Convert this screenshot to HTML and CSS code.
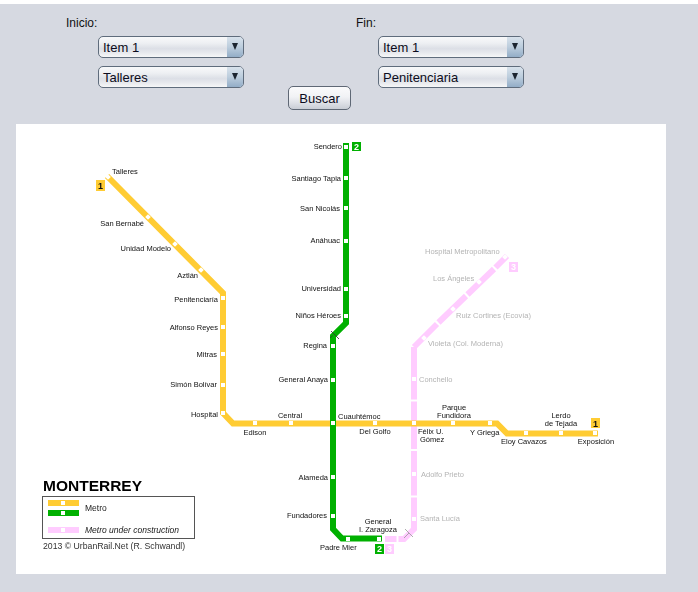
FILE: index.html
```html
<!DOCTYPE html>
<html lang="es">
<head>
<meta charset="utf-8">
<title>Metro Monterrey</title>
<link rel="stylesheet" href="styles.css">
</head>
<body>
<main class="panel">
  <form class="form">
    <div class="field">
      <div class="label">Inicio:</div>
      <div class="combos combos-start">
        <div class="combo"><span class="combo-text">Item 1</span><span class="combo-arrow"></span></div>
        <div class="combo"><span class="combo-text">Talleres</span><span class="combo-arrow"></span></div>
      </div>
    </div>
    <div class="field">
      <div class="label">Fin:</div>
      <div class="combos combos-end">
        <div class="combo"><span class="combo-text">Item 1</span><span class="combo-arrow"></span></div>
        <div class="combo"><span class="combo-text">Penitenciaria</span><span class="combo-arrow"></span></div>
      </div>
    </div>
  </form>
  <button class="search" type="button">Buscar</button>
  <div class="map">
    <svg class="map-svg" width="650" height="450" viewBox="16 124 650 450" xmlns="http://www.w3.org/2000/svg">
      <g class="line pink">
        <path d="M414 347V399.500M414 401.500V449M414 451V495.500M414 497.500V529L404 539H398.500M396.500 539H385"/>
        <path d="M414 347L437 324M438.500 322.500L466 296M467.500 294.500L494 269M495.500 267.500L507 256"/>
      </g>
      <path class="line yellow" d="M107 176L223 293V413L233 423.500H497L507 433.500H598"/>
      <path class="line green" d="M346 143V323L333 336V529L342 538.500H382"/>
      <path class="xover" d="M331 331L339 339M332.500 335.500L330 338"/>
      <path class="xover faint" d="M405 529L413 537M409 533L404 538"/>
      <g class="stops">
        <rect x="106" y="175" width="4" height="4" transform="rotate(45 108 177)"/>
        <rect x="146" y="215" width="4" height="4" transform="rotate(45 148 217)"/>
        <rect x="173" y="242" width="4" height="4" transform="rotate(45 175 244)"/>
        <rect x="199" y="268" width="4" height="4" transform="rotate(45 201 270)"/>
        <rect x="221" y="296" width="4" height="4"/>
        <rect x="221" y="325" width="4" height="4"/>
        <rect x="221" y="352" width="4" height="4"/>
        <rect x="221" y="383" width="4" height="4"/>
        <rect x="221" y="411" width="4" height="4"/>
        <rect x="253" y="421" width="4" height="4"/>
        <rect x="289" y="421" width="4" height="4"/>
        <rect x="331" y="421" width="4" height="4"/>
        <rect x="373" y="421" width="4" height="4"/>
        <rect x="412" y="421" width="4" height="4"/>
        <rect x="451" y="421" width="4" height="4"/>
        <rect x="488" y="421" width="4" height="4"/>
        <rect x="524" y="431" width="4" height="4"/>
        <rect x="559" y="431" width="4" height="4"/>
        <rect x="593" y="431" width="4" height="4"/>
        <rect x="344" y="145" width="4" height="4"/>
        <rect x="344" y="176" width="4" height="4"/>
        <rect x="344" y="206" width="4" height="4"/>
        <rect x="344" y="239" width="4" height="4"/>
        <rect x="344" y="287" width="4" height="4"/>
        <rect x="344" y="314" width="4" height="4"/>
        <rect x="331" y="344" width="4" height="4"/>
        <rect x="331" y="378" width="4" height="4"/>
        <rect x="331" y="475" width="4" height="4"/>
        <rect x="331" y="514" width="4" height="4"/>
        <rect x="346" y="537" width="4" height="4"/>
        <rect x="377" y="537" width="4" height="4"/>
        <rect x="412" y="377" width="4" height="4"/>
        <rect x="412" y="472" width="4" height="4"/>
        <rect x="412" y="517" width="4" height="4"/>
        <rect x="422" y="336" width="4" height="4" transform="rotate(45 424 338)"/>
        <rect x="451" y="307" width="4" height="4" transform="rotate(45 453 309)"/>
        <rect x="477" y="280" width="4" height="4" transform="rotate(45 479 282)"/>
        <rect x="503" y="255" width="4" height="4" transform="rotate(45 505 257)"/>
      </g>

      <rect class="badge-yellow" x="96" y="180" width="9" height="11"/>
      <text class="badge-text dark" x="100.500" y="189">1</text>
      <rect class="badge-green" x="352" y="142" width="9" height="9"/>
      <text class="badge-text" x="356.500" y="150">2</text>
      <rect class="badge-pink" x="509" y="262" width="9" height="10"/>
      <text class="badge-text" x="513.500" y="270">3</text>
      <rect class="badge-yellow" x="591" y="418" width="9" height="10"/>
      <text class="badge-text dark" x="595.500" y="427">1</text>
      <rect class="badge-green" x="375" y="544" width="9" height="10"/>
      <text class="badge-text" x="379.500" y="552">2</text>
      <rect class="badge-pink" x="385" y="544" width="9" height="10"/>
      <text class="badge-text" x="389.500" y="552">3</text>

      <g class="names">
        <text x="112" y="174">Talleres</text>
        <g class="end">
          <text x="144" y="226">San Bernabé</text>
          <text x="171" y="251">Unidad Modelo</text>
          <text x="198" y="278">Aztlán</text>
          <text x="218" y="302">Penitenciaría</text>
          <text x="218" y="330">Alfonso Reyes</text>
          <text x="217" y="357">Mitras</text>
          <text x="217" y="387">Simón Bolívar</text>
          <text x="218" y="417">Hospital</text>
          <text x="342" y="149">Sendero</text>
          <text x="341" y="181">Santiago Tapia</text>
          <text x="340" y="211">San Nicolás</text>
          <text x="340" y="243">Anáhuac</text>
          <text x="341" y="291">Universidad</text>
          <text x="341" y="318">Niños Héroes</text>
          <text x="327" y="348">Regina</text>
          <text x="328" y="382">General Anaya</text>
          <text x="328" y="480">Alameda</text>
          <text x="327" y="518">Fundadores</text>
        </g>
        <g class="mid">
          <text x="255" y="435">Edison</text>
          <text x="290" y="418">Central</text>
          <text x="375" y="434">Del Golfo</text>
          <text x="454" y="410">Parque</text>
          <text x="454" y="418">Fundidora</text>
          <text x="561" y="418">Lerdo</text>
          <text x="561" y="426">de Tejada</text>
          <text x="596" y="444">Exposición</text>
          <text x="378" y="524">General</text>
          <text x="378" y="532">I. Zaragoza</text>
        </g>
        <text x="338" y="419">Cuauhtémoc</text>
        <text x="418" y="434">Félix U.</text>
        <text x="420" y="442">Gómez</text>
        <text x="470" y="435">Y Griega</text>
        <text x="501" y="444">Eloy Cavazos</text>
        <text x="320" y="550">Padre Mier</text>
      </g>
      <g class="names future">
        <text x="425" y="254">Hospital Metropolitano</text>
        <text x="433" y="281">Los Ángeles</text>
        <text x="456" y="318">Ruiz Cortines (Ecovía)</text>
        <text x="428" y="346">Violeta (Col. Moderna)</text>
        <text x="419" y="382">Conchello</text>
        <text x="421" y="477">Adolfo Prieto</text>
        <text x="420" y="521">Santa Lucía</text>
      </g>

      <text class="city" x="43" y="491">MONTERREY</text>
      <rect class="legend" x="42.500" y="496.500" width="152" height="42"/>
      <rect class="swatch-yellow" x="48" y="500" width="31" height="6"/>
      <rect class="swatch-green" x="48" y="510" width="31" height="6"/>
      <rect class="swatch-pink" x="48" y="527" width="31" height="6"/>
      <g class="stops">
        <rect x="61" y="501" width="4" height="4"/>
        <rect x="61" y="511" width="4" height="4"/>
        <rect x="61" y="528" width="4" height="4"/>
      </g>
      <text class="legend-text" x="85" y="511">Metro</text>
      <text class="legend-text italic" x="85" y="533">Metro under construction</text>
      <text class="credit" x="43" y="549">2013 © UrbanRail.Net (R. Schwandl)</text>
    </svg>
  </div>
</main>
</body>
</html>
```
FILE: styles.css
```css
* { box-sizing: border-box; }

html, body { margin: 0; padding: 0; background: #fff; }

body { width: 698px; height: 592px; overflow: hidden; padding-top: 4px; }

.panel {
  height: 588px;
  background: #d6d9e1;
  font-family: "Liberation Sans", Arial, sans-serif;
  color: #111;
}

.form { display: flex; padding: 12px 0 0 66px; }

.field { width: 290px; }

.label { font-size: 12px; line-height: 14px; height: 20px; }

.combos { display: flex; flex-direction: column; gap: 8px; }
.combos-start { margin-left: 32px; }
.combos-end { margin-left: 22px; }

.combo {
  display: flex;
  width: 146px;
  height: 22px;
  border: 1px solid #5f6c7c;
  border-radius: 5px;
  overflow: hidden;
  background: linear-gradient(#f8f9fa 0%, #eef0f3 30%, #dcdfe6 58%, #e8eaee 80%, #f6f7f8 100%);
}

.combo-text {
  flex: 1;
  padding-left: 4px;
  font-size: 13px;
  line-height: 22px;
  color: #0c0c20;
}

.combo-arrow {
  position: relative;
  width: 16px;
  background: linear-gradient(#d8e2ec 0%, #bccddd 50%, #93adc7 100%);
}

.combo-arrow::after {
  content: "";
  position: absolute;
  left: 5px;
  top: 6px;
  border-left: 3.500px solid transparent;
  border-right: 3.500px solid transparent;
  border-top: 7px solid #1c2530;
}

.search {
  display: block;
  width: 63px;
  height: 24px;
  margin: -2px 0 0 288px;
  padding: 0;
  border: 1px solid #5f6875;
  border-radius: 5px;
  background: linear-gradient(#fbfbfc 0%, #f1f2f5 45%, #dcdfe5 75%, #c9cdd5 100%);
  font-family: "Liberation Sans", Arial, sans-serif;
  font-size: 13px;
  color: #0c0c20;
}

.map {
  width: 650px;
  height: 450px;
  margin: 14px 0 0 16px;
  background: #fff;
}

.map-svg { display: block; filter: blur(0.25px); }

.line { fill: none; stroke-width: 6; }
.yellow { stroke: #ffcc33; }
.green { stroke: #00b000; }
.pink path { stroke: #ffccff; fill: none; }

.xover { fill: none; stroke: #333; stroke-width: 0.8; }
.xover.faint { stroke: #999; }

.stops rect { fill: #fff; }

.badge-yellow, .swatch-yellow { fill: #ffcc33; }
.badge-green, .swatch-green { fill: #00b000; }
.badge-pink, .swatch-pink { fill: #ffccff; }

.badge-text {
  font-family: "Liberation Sans", Arial, sans-serif;
  font-size: 9px;
  font-weight: 700;
  fill: #fff;
  text-anchor: middle;
}
.badge-text.dark { fill: #111; }

.names text {
  font-family: "Liberation Sans", Arial, sans-serif;
  font-size: 7.500px;
  fill: #111;
}
.names .end text { text-anchor: end; }
.names .mid text { text-anchor: middle; }
.names.future text { fill: #b4b4b4; }

.city {
  font-family: "Liberation Sans", Arial, sans-serif;
  font-size: 15.500px;
  font-weight: 700;
  fill: #000;
}

.legend { fill: none; stroke: #555; stroke-width: 1; }

.legend-text {
  font-family: "Liberation Sans", Arial, sans-serif;
  font-size: 8.500px;
  fill: #222;
}
.italic { font-style: italic; }

.credit {
  font-family: "Liberation Sans", Arial, sans-serif;
  font-size: 8.700px;
  fill: #333;
}
```
